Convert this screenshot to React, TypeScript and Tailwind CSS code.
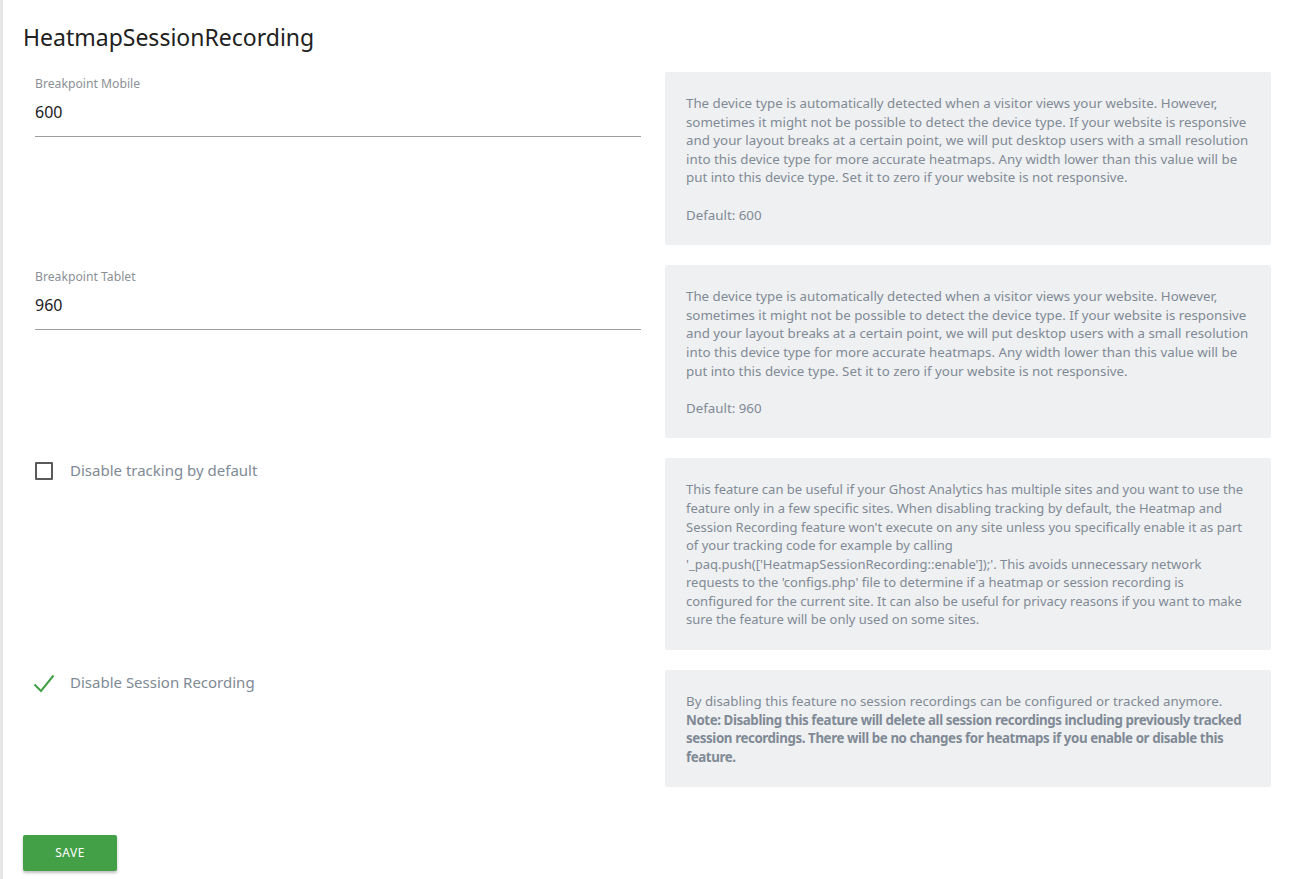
import React from "react";

const helpBreakpoint =
  "The device type is automatically detected when a visitor views your website. However, sometimes it might not be possible to detect the device type. If your website is responsive and your layout breaks at a certain point, we will put desktop users with a small resolution into this device type for more accurate heatmaps. Any width lower than this value will be put into this device type. Set it to zero if your website is not responsive.";

function HelpBox({ children, small }: { children: React.ReactNode; small?: boolean }) {
  return (
    <div
      className={
        "bg-[#eff0f1] text-[#7f8a96] leading-[18.6px] px-[21px] pt-[22px] pb-[21px] rounded-[2px] " +
        (small ? "text-[13px]" : "text-[13.3px]")
      }
    >
      {children}
    </div>
  );
}

function TextField({ label, value }: { label: string; value: string }) {
  return (
    <div className="pt-[4px]">
      <div className="text-[12.2px] leading-4 text-[#8c9096]">{label}</div>
      <div className="pt-[8px] pb-[12px] border-b border-[#9e9e9e] text-[16px] leading-6 text-[#212121]">
        {value}
      </div>
    </div>
  );
}

function CheckRow({ label, checked }: { label: string; checked: boolean }) {
  return (
    <div className="flex items-start gap-[17px]">
      {checked ? (
        <svg width="22" height="24" viewBox="0 0 22 24" className="-ml-[2px] mt-[1px] mr-[-2px]">
          <polyline
            points="1.5,13.5 8,20 20.5,4.5"
            fill="none"
            stroke="#43a047"
            strokeWidth="2"
          />
        </svg>
      ) : (
        <div className="mt-[4px] size-[18px] border-2 border-[#5a5a5a] rounded-[1px]" />
      )}
      <span className="text-[15px] leading-6 text-[#7f8a96]">{label}</span>
    </div>
  );
}

export default function App() {
  return (
    <div
      className="min-h-[879px] bg-white border-l-[3px] border-[#e6e6e6] pl-[20px] pr-[20px] pt-[21px] pb-[9px]"
      style={{ fontFamily: '"Noto Sans", "Open Sans", sans-serif' }}
    >
      <h2 className="text-[23px] leading-8 text-[#212121] mb-[19px]">HeatmapSessionRecording</h2>

      <div className="flex flex-col gap-5 w-[1260px]">
        {/* Breakpoint Mobile */}
        <div className="grid grid-cols-2">
          <div className="px-3">
            <TextField label="Breakpoint Mobile" value="600" />
          </div>
          <div className="px-3">
            <HelpBox>
              {helpBreakpoint}
              <br />
              <br />
              Default: 600
            </HelpBox>
          </div>
        </div>

        {/* Breakpoint Tablet */}
        <div className="grid grid-cols-2">
          <div className="px-3">
            <TextField label="Breakpoint Tablet" value="960" />
          </div>
          <div className="px-3">
            <HelpBox>
              {helpBreakpoint}
              <br />
              <br />
              Default: 960
            </HelpBox>
          </div>
        </div>

        {/* Disable tracking */}
        <div className="grid grid-cols-2">
          <div className="px-3">
            <CheckRow label="Disable tracking by default" checked={false} />
          </div>
          <div className="px-3">
            <HelpBox small>
              This feature can be useful if your Ghost Analytics has multiple sites and you want to use the
              feature only in a few specific sites. When disabling tracking by default, the Heatmap and
              Session Recording feature won't execute on any site unless you specifically enable it as part
              of your tracking code for example by calling '_paq.push(['HeatmapSessionRecording::enable']);'.
              This avoids unnecessary network requests to the 'configs.php' file to determine if a heatmap or
              session recording is configured for the current site. It can also be useful for privacy reasons
              if you want to make sure the feature will be only used on some sites.
            </HelpBox>
          </div>
        </div>

        {/* Disable session recording */}
        <div className="grid grid-cols-2">
          <div className="px-3">
            <CheckRow label="Disable Session Recording" checked />
          </div>
          <div className="px-3">
            <HelpBox>
              By disabling this feature no session recordings can be configured or tracked anymore.
              <br />
              <strong className="font-bold tracking-[-0.4px]">
                Note: Disabling this feature will delete all session recordings including previously tracked
                session recordings. There will be no changes for heatmaps if you enable or disable this
                feature.
              </strong>
            </HelpBox>
          </div>
        </div>
      </div>

      <button className="mt-[48px] h-9 w-[94px] bg-[#43a047] text-white text-[12px] tracking-[0.5px] uppercase rounded-[2px] shadow-[0_2px_3px_rgba(0,0,0,0.25)]">
        Save
      </button>
    </div>
  );
}
